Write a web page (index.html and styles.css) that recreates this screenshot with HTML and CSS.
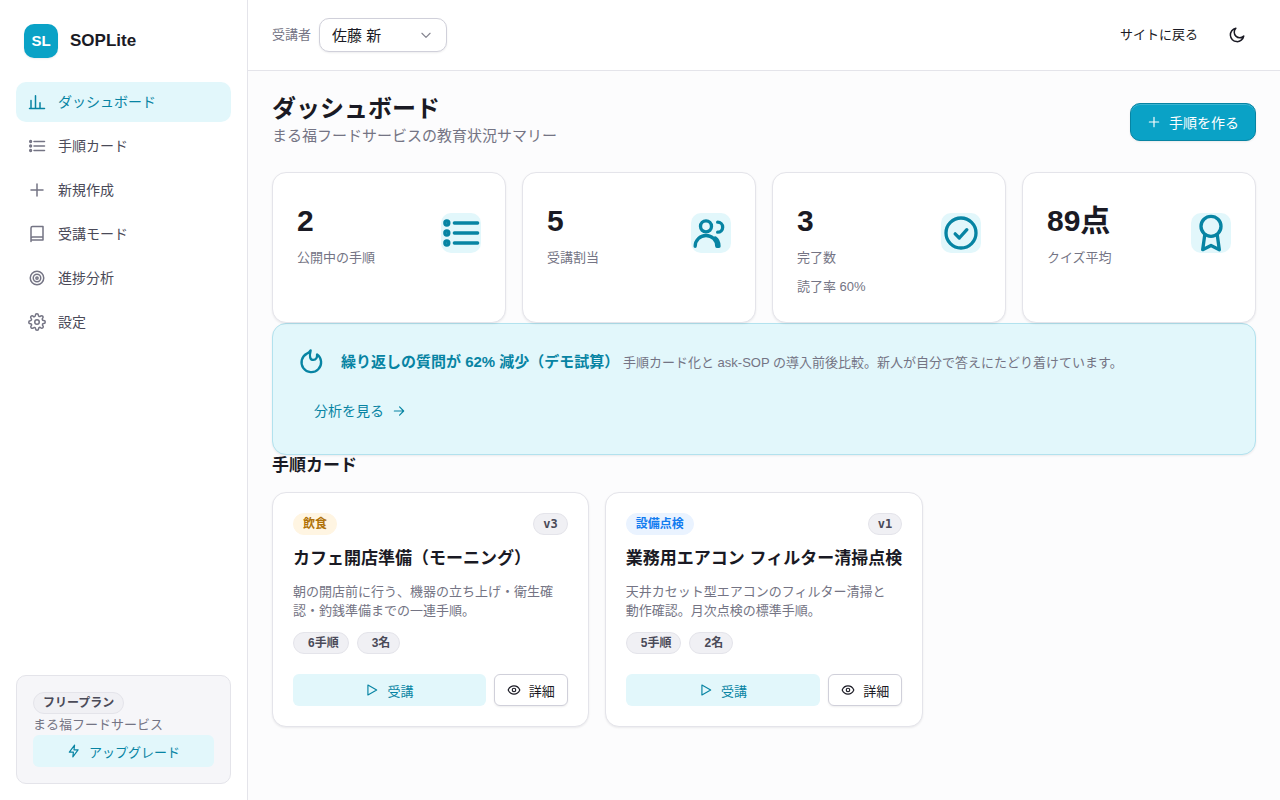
FILE: index.html
```html
<!DOCTYPE html>
<html lang="ja">
<head>
    <meta charset="UTF-8">
    <meta name="viewport" content="width=device-width, initial-scale=1.0">
    <title>ダッシュボード | SOPLite</title>
    <link rel="stylesheet" href="styles.css">
</head>
<body>
    <div class="app">
        <aside class="sidebar">
            <div class="brand">
                <span class="brand-mark">SL</span>
                <span class="brand-name">SOPLite</span>
            </div>
            <nav class="nav">
                <a class="nav-item active" href="#">
                    <svg class="icon" viewBox="0 0 24 24"><path d="M2 20.5h20M4 20V10M10 20V3.5M16 20v-7"/></svg>
                    ダッシュボード
                </a>
                <a class="nav-item" href="#">
                    <svg class="icon" viewBox="0 0 24 24"><path d="M8 6h14M8 12h14M8 18h14"/><circle cx="3.5" cy="6" r="1.2"/><circle cx="3.5" cy="12" r="1.2"/><circle cx="3.5" cy="18" r="1.2"/></svg>
                    手順カード
                </a>
                <a class="nav-item" href="#">
                    <svg class="icon" viewBox="0 0 24 24"><path d="M12 4v16M4 12h16"/></svg>
                    新規作成
                </a>
                <a class="nav-item" href="#">
                    <svg class="icon" viewBox="0 0 24 24"><path d="M4 22V4a2 2 0 0 1 2-2h14v18H4M4 18a2 2 0 0 1 2-2h14"/></svg>
                    受講モード
                </a>
                <a class="nav-item" href="#">
                    <svg class="icon" viewBox="0 0 24 24"><circle cx="12" cy="12" r="9"/><circle cx="12" cy="12" r="5"/><circle cx="12" cy="12" r="1.5"/></svg>
                    進捗分析
                </a>
                <a class="nav-item" href="#">
                    <svg class="icon" viewBox="0 0 24 24"><circle cx="12" cy="12" r="3"/><path d="M19.4 15a1.65 1.65 0 0 0 .33 1.82l.06.06a2 2 0 1 1-2.83 2.83l-.06-.06a1.65 1.65 0 0 0-2.8 1.17V21a2 2 0 0 1-4 0v-.09a1.65 1.65 0 0 0-2.9-1.09l-.06.06a2 2 0 1 1-2.83-2.83l.06-.06a1.65 1.65 0 0 0-1.17-2.8H3a2 2 0 0 1 0-4h.09a1.65 1.65 0 0 0 1.09-2.9l-.06-.06a2 2 0 1 1 2.83-2.83l.06.06a1.65 1.65 0 0 0 2.8-1.17V3a2 2 0 0 1 4 0v.09a1.65 1.65 0 0 0 2.8 1.17l.06-.06a2 2 0 1 1 2.83 2.83l-.06.06a1.65 1.65 0 0 0 1.17 2.8H21a2 2 0 0 1 0 4h-.09a1.65 1.65 0 0 0-1.51 1z"/></svg>
                    設定
                </a>
            </nav>
            <div class="plan">
                <span class="badge">フリープラン</span>
                <p class="plan-org">まる福フードサービス</p>
                <button class="btn btn-soft btn-sm" type="button">
                    <svg class="icon" viewBox="0 0 24 24"><path d="M13 2L4 14h7l-1 8 9-12h-7z"/></svg>
                    アップグレード
                </button>
            </div>
        </aside>

        <div class="content">
            <header class="topbar">
                <label class="learner-label" for="learner">受講者</label>
                <div class="select-wrap">
                    <select class="select" id="learner">
                        <option>佐藤 新</option>
                    </select>
                    <svg class="icon select-arrow" viewBox="0 0 24 24"><path d="M5 9l7 7 7-7"/></svg>
                </div>
                <a class="back-link" href="#">サイトに戻る</a>
                <button class="theme-btn" type="button" aria-label="テーマ切替">
                    <svg class="icon" viewBox="0 0 24 24"><path d="M21 13.5A9 9 0 1 1 10.5 3a7 7 0 0 0 10.5 10.5z"/></svg>
                </button>
            </header>

            <main class="main">
                <div class="page-head">
                    <div>
                        <h1>ダッシュボード</h1>
                        <p class="page-sub">まる福フードサービスの教育状況サマリー</p>
                    </div>
                    <button class="btn btn-primary" type="button">
                        <svg class="icon" viewBox="0 0 24 24"><path d="M12 4v16M4 12h16"/></svg>
                        手順を作る
                    </button>
                </div>

                <section class="stats">
                    <div class="stat">
                        <div class="stat-row">
                            <div>
                                <div class="stat-value">2</div>
                                <div class="stat-label">公開中の手順</div>
                            </div>
                            <svg class="icon stat-icon" viewBox="0 0 24 24"><path d="M8 6h14M8 12h14M8 18h14"/><circle cx="3.5" cy="6" r="1.2"/><circle cx="3.5" cy="12" r="1.2"/><circle cx="3.5" cy="18" r="1.2"/></svg>
                        </div>
                    </div>
                    <div class="stat">
                        <div class="stat-row">
                            <div>
                                <div class="stat-value">5</div>
                                <div class="stat-label">受講割当</div>
                            </div>
                            <svg class="icon stat-icon" viewBox="0 0 24 24"><circle cx="9" cy="8" r="3.3"/><path d="M2.5 20a6.5 6.5 0 0 1 13 0M16 5.5a3 3 0 0 1 0 6M14.5 15c1.500 1 2.300 3 2.300 5"/></svg>
                        </div>
                    </div>
                    <div class="stat">
                        <div class="stat-row">
                            <div>
                                <div class="stat-value">3</div>
                                <div class="stat-label">完了数</div>
                            </div>
                            <svg class="icon stat-icon" viewBox="0 0 24 24"><circle cx="12" cy="12" r="9"/><path d="M8.5 12.5l2.5 2.5 4.500-5"/></svg>
                        </div>
                        <div class="stat-note">読了率 60%</div>
                    </div>
                    <div class="stat">
                        <div class="stat-row">
                            <div>
                                <div class="stat-value">89点</div>
                                <div class="stat-label">クイズ平均</div>
                            </div>
                            <svg class="icon stat-icon" viewBox="0 0 24 24"><circle cx="12" cy="8" r="6"/><path d="M8.2 13.5L7 22l5-2.5 5 2.5-1.2-8.5"/></svg>
                        </div>
                    </div>
                </section>

                <section class="banner">
                    <div class="banner-row">
                        <svg class="icon banner-icon" viewBox="0 0 24 24"><path d="M8.5 4.8A8.4 8.4 0 1 0 17.2 5.500c.3 2.500-.8 4.700-3.200 4.700-2.600 0-3.800-2.700-2.300-8.200-.6 1.400-1.700 2.300-3.200 2.800z"/></svg>
                        <p class="banner-text"><strong>繰り返しの質問が 62% 減少（デモ試算）</strong> 手順カード化と ask-SOP の導入前後比較。新人が自分で答えにたどり着けています。</p>
                    </div>
                    <a class="btn btn-ghost" href="#">
                        分析を見る
                        <svg class="icon" viewBox="0 0 24 24"><path d="M4 12h16M13 5l7 7-7 7"/></svg>
                    </a>
                </section>

                <h2>手順カード</h2>
                <section class="cards">
                    <article class="card">
                        <div class="card-top">
                            <span class="badge badge-food">飲食</span>
                            <span class="badge badge-version">v3</span>
                        </div>
                        <h3>カフェ開店準備（モーニング）</h3>
                        <p class="card-desc">朝の開店前に行う、機器の立ち上げ・衛生確認・釣銭準備までの一連手順。</p>
                        <div class="card-meta">
                            <span class="badge badge-count">6手順</span>
                            <span class="badge badge-count">3名</span>
                        </div>
                        <div class="card-actions">
                            <button class="btn btn-soft btn-sm" type="button">
                                <svg class="icon" viewBox="0 0 24 24"><path d="M5 3.5v17L20 12z"/></svg>
                                受講
                            </button>
                            <button class="btn btn-outline btn-sm" type="button">
                                <svg class="icon" viewBox="0 0 24 24"><path d="M2 12C4 7.500 7.500 5 12 5s8 2.500 10 7c-2 4.500-5.500 7-10 7S4 16.500 2 12z"/><circle cx="12" cy="12" r="3"/></svg>
                                詳細
                            </button>
                        </div>
                    </article>
                    <article class="card">
                        <div class="card-top">
                            <span class="badge badge-equip">設備点検</span>
                            <span class="badge badge-version">v1</span>
                        </div>
                        <h3>業務用エアコン フィルター清掃点検</h3>
                        <p class="card-desc">天井カセット型エアコンのフィルター清掃と動作確認。月次点検の標準手順。</p>
                        <div class="card-meta">
                            <span class="badge badge-count">5手順</span>
                            <span class="badge badge-count">2名</span>
                        </div>
                        <div class="card-actions">
                            <button class="btn btn-soft btn-sm" type="button">
                                <svg class="icon" viewBox="0 0 24 24"><path d="M5 3.5v17L20 12z"/></svg>
                                受講
                            </button>
                            <button class="btn btn-outline btn-sm" type="button">
                                <svg class="icon" viewBox="0 0 24 24"><path d="M2 12C4 7.500 7.500 5 12 5s8 2.500 10 7c-2 4.500-5.500 7-10 7S4 16.500 2 12z"/><circle cx="12" cy="12" r="3"/></svg>
                                詳細
                            </button>
                        </div>
                    </article>
                </section>
            </main>
        </div>
    </div>
</body>
</html>
```
FILE: styles.css
```css
:root {
    --accent: #0aa2c6;
    --accent-dark: #0784a3;
    --accent-soft: #e2f7fb;
    --text: #1a1a24;
    --text-mid: #4a4a58;
    --text-muted: #747484;
    --border: #e4e4ea;
    --border-strong: #d0d0da;
    --shadow: 0 1px 2px rgba(20, 20, 40, 0.08);
}
* {
    box-sizing: border-box;
}
body {
    margin: 0;
    font-family: "Liberation Sans", "Noto Sans CJK JP", sans-serif;
    font-size: 14px;
    line-height: 20px;
    color: var(--text);
    background-color: #fcfcfd;
}
h1, h2, h3, p {
    margin: 0;
}
a {
    color: inherit;
    text-decoration: none;
}
button, select {
    font-family: inherit;
}
.icon {
    width: 18px;
    height: 18px;
    flex-shrink: 0;
    fill: none;
    stroke: currentColor;
    stroke-width: 2;
    stroke-linecap: round;
    stroke-linejoin: round;
}
.app {
    display: flex;
    min-height: 100vh;
}

/* sidebar */
.sidebar {
    width: 248px;
    flex-shrink: 0;
    display: flex;
    flex-direction: column;
    padding: 24px 16px 16px;
    background-color: #fff;
    border-right: 1px solid var(--border);
}
.brand {
    display: flex;
    align-items: center;
    gap: 12px;
    padding: 0 8px;
    margin-bottom: 24px;
}
.brand-mark {
    width: 34px;
    height: 34px;
    line-height: 34px;
    text-align: center;
    font-size: 15px;
    font-weight: bold;
    color: #fff;
    background-color: var(--accent);
    border-radius: 10px;
    box-shadow: var(--shadow);
}
.brand-name {
    font-size: 17px;
    font-weight: bold;
}
.nav {
    display: flex;
    flex-direction: column;
    gap: 4px;
}
.nav-item {
    display: flex;
    align-items: center;
    gap: 12px;
    padding: 10px 12px;
    color: var(--text-mid);
    border-radius: 10px;
}
.nav-item .icon {
    color: var(--text-muted);
}
.nav-item.active, .nav-item.active .icon {
    color: var(--accent-dark);
}
.nav-item.active {
    background-color: var(--accent-soft);
}
.plan {
    margin-top: auto;
    padding: 16px;
    background-color: #f6f6f9;
    border: 1px solid var(--border);
    border-radius: 10px;
}
.plan-org {
    font-size: 13px;
    line-height: 21px;
    color: var(--text-muted);
}
.plan .btn {
    width: 100%;
}

/* badges */
.badge {
    display: block;
    width: fit-content;
    padding: 0 9px;
    font-size: 12px;
    line-height: 20px;
    font-weight: bold;
    color: var(--text-mid);
    background-color: #f0f0f4;
    border: 1px solid var(--border);
    border-radius: 11px;
}
.badge-food {
    color: #b07208;
    background-color: #fff5e2;
    border-color: #fff5e2;
}
.badge-equip {
    color: #127cf0;
    background-color: #eaf3ff;
    border-color: #eaf3ff;
}
.badge-version {
    font-family: "DejaVu Sans Mono", monospace;
}
.badge-count {
    padding-left: 14px;
}

/* buttons */
.btn {
    display: flex;
    align-items: center;
    justify-content: center;
    gap: 8px;
    height: 38px;
    padding: 0 16px;
    font-size: 14px;
    border: 1px solid transparent;
    border-radius: 10px;
    background-color: transparent;
    cursor: pointer;
}
.btn .icon {
    width: 14px;
    height: 14px;
}
.btn-sm {
    height: 32px;
    padding: 0 12px;
    font-size: 13px;
    border-radius: 6px;
}
.btn-primary {
    color: #fff;
    background-color: var(--accent);
    border-color: var(--accent-dark);
    box-shadow: var(--shadow), inset 0 1px 0 rgba(255, 255, 255, 0.2);
}
.btn-soft {
    color: var(--accent-dark);
    background-color: var(--accent-soft);
}
.btn-outline {
    color: var(--text);
    background-color: #fff;
    border-color: var(--border-strong);
    box-shadow: var(--shadow);
}
.btn-ghost {
    width: fit-content;
    color: var(--accent-dark);
}

/* top bar */
.content {
    flex: 1;
    min-width: 0;
}
.topbar {
    display: flex;
    align-items: center;
    gap: 8px;
    padding: 18px 24px;
    background-color: #fff;
    border-bottom: 1px solid var(--border);
}
.learner-label {
    font-size: 13px;
    color: var(--text-muted);
}
.select-wrap {
    position: relative;
}
.select {
    display: block;
    appearance: none;
    height: 34px;
    padding: 0 64px 0 12px;
    font-size: 15px;
    color: var(--text);
    background-color: #fff;
    border: 1px solid var(--border-strong);
    border-radius: 10px;
    box-shadow: var(--shadow);
}
.select-arrow {
    position: absolute;
    top: 10px;
    right: 14px;
    width: 14px;
    height: 14px;
    color: #858590;
    pointer-events: none;
}
.back-link {
    margin-left: auto;
    padding: 0 12px;
    font-size: 13px;
}
.theme-btn {
    display: flex;
    align-items: center;
    justify-content: center;
    width: 38px;
    height: 34px;
    padding: 0;
    color: var(--text);
    background-color: transparent;
    border: none;
    cursor: pointer;
}

/* dashboard */
.main {
    padding: 24px;
}
.page-head {
    display: flex;
    align-items: center;
    justify-content: space-between;
    margin-bottom: 24px;
}
h1 {
    font-size: 24px;
    line-height: 28px;
}
.page-sub {
    font-size: 15px;
    line-height: 25px;
    color: var(--text-muted);
}
.stats {
    display: grid;
    grid-template-columns: repeat(4, 1fr);
    gap: 16px;
}
.stat, .card {
    background-color: #fff;
    border: 1px solid var(--border);
    border-radius: 14px;
    box-shadow: var(--shadow);
}
.stat {
    padding: 24px;
}
.stat-row {
    display: flex;
    align-items: flex-start;
    justify-content: space-between;
}
.stat-value {
    font-size: 30px;
    line-height: 48px;
    font-weight: bold;
}
.stat-label {
    font-size: 13px;
    line-height: 26px;
    color: var(--text-muted);
}
.stat-note {
    margin-top: 5px;
    font-size: 13px;
    line-height: 22px;
    color: var(--text-muted);
}
.stat-icon {
    width: 40px;
    height: 40px;
    margin-top: 16px;
    color: var(--accent-dark);
    background-color: var(--accent-soft);
    border-radius: 10px;
}
.banner {
    padding: 24px;
    background-color: var(--accent-soft);
    border: 1px solid #b2e2ee;
    border-radius: 14px;
    box-shadow: var(--shadow);
}
.banner-row {
    display: flex;
    align-items: center;
    gap: 16px;
    margin-bottom: 16px;
}
.banner-icon {
    width: 28px;
    height: 28px;
    color: var(--accent-dark);
}
.banner-text {
    font-size: 13px;
    line-height: 27px;
    color: var(--text-muted);
}
.banner-text strong {
    font-size: 15px;
    color: var(--accent-dark);
}
h2 {
    margin-bottom: 16px;
    font-size: 17px;
    line-height: 21px;
}
.cards {
    display: grid;
    grid-template-columns: repeat(3, 1fr);
    gap: 16px;
}
.card {
    padding: 20px;
}
.card-top {
    display: flex;
    justify-content: space-between;
    margin-bottom: 13px;
}
h3 {
    margin-bottom: 12px;
    font-size: 17px;
    line-height: 22px;
    white-space: nowrap;
}
.card-desc {
    margin-bottom: 12px;
    padding-right: 4px;
    font-size: 13px;
    line-height: 19px;
    color: var(--text-muted);
}
.card-meta {
    display: flex;
    gap: 8px;
    margin-bottom: 20px;
}
.card-actions {
    display: flex;
    gap: 8px;
}
.card-actions .btn-soft {
    flex: 1;
}
```
